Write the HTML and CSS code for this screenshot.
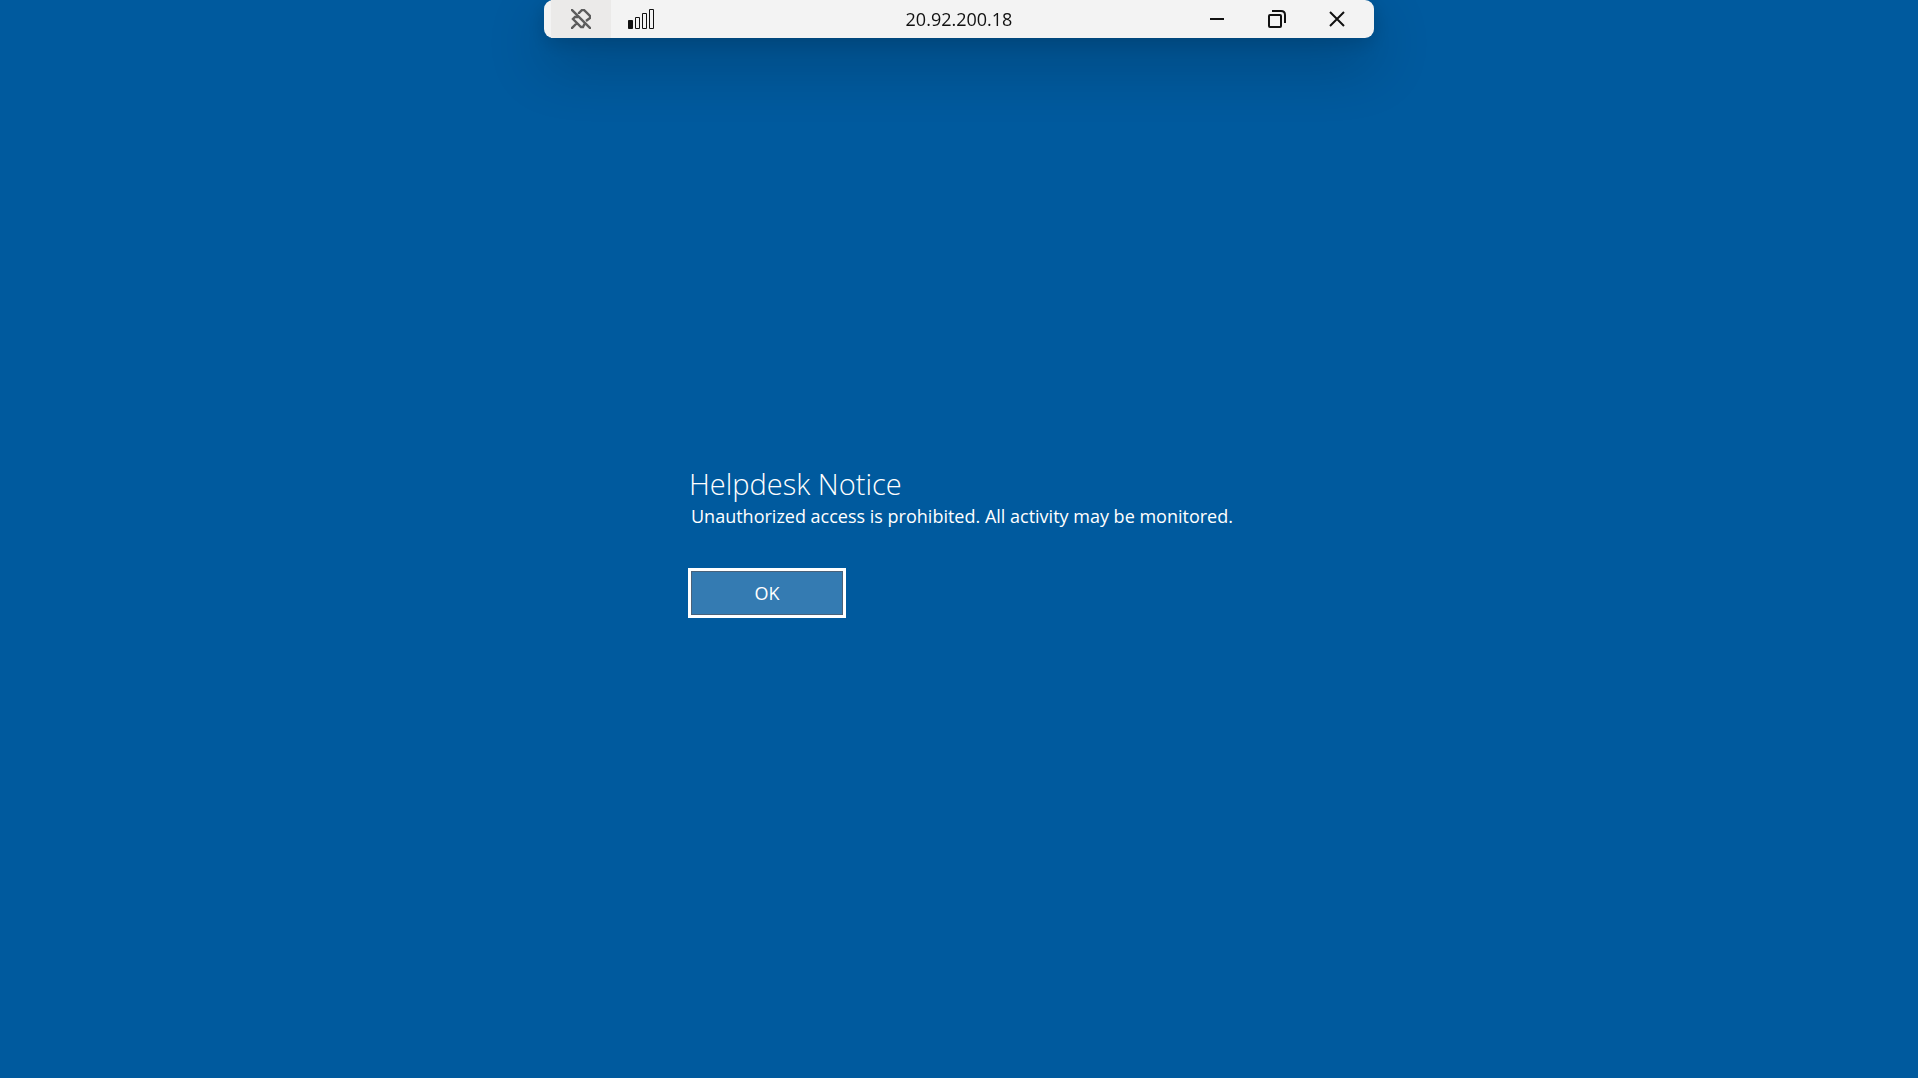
FILE: index.html
```html
<!DOCTYPE html>
<html lang="en">
<head>
<meta charset="utf-8">
<title>20.92.200.18 - Remote Desktop</title>
<link rel="stylesheet" href="styles.css">
</head>
<body>
<header class="connection-bar">
  <div class="bar-group">
    <button class="bar-button pin" type="button" aria-label="Unpin connection bar">
      <svg width="20" height="20" viewBox="0 0 20 20" fill="none" stroke="currentColor" stroke-width="2.400">
        <path d="M0 0L20 20M0 20L6 14M8 5V4L11 1H13L19 7V9L15 12M7 8L4 8L2 10L10 18H12L14 14"/>
      </svg>
    </button>
    <button class="bar-button signal" type="button" aria-label="Connection quality">
      <svg width="26" height="20" viewBox="0 0 26 20" fill="none" stroke="currentColor">
        <path fill="currentColor" d="M.5 11.500h4v8h-4z"/>
        <path d="M7.500 8.500h4v11h-4zM14.500 4.500h4v15h-4zM21.500 .5h4v19h-4z"/>
      </svg>
    </button>
  </div>
  <h1 class="bar-title">20.92.200.18</h1>
  <div class="bar-group bar-group-end">
    <button class="bar-button" type="button" aria-label="Minimize">
      <svg width="20" height="20" viewBox="0 0 20 20" fill="none" stroke="currentColor" stroke-width="2"><path d="M3 10h14"/></svg>
    </button>
    <button class="bar-button" type="button" aria-label="Restore">
      <svg width="20" height="20" viewBox="0 0 20 20" fill="none" stroke="currentColor" stroke-width="2">
        <rect x="2" y="6" width="12" height="12" rx="1"/><path d="M5 2h9q4 0 4 4v8"/>
      </svg>
    </button>
    <button class="bar-button" type="button" aria-label="Close">
      <svg width="20" height="20" viewBox="0 0 20 20" fill="none" stroke="currentColor" stroke-width="2"><path d="M3 3L17 17M17 3L3 17"/></svg>
    </button>
  </div>
</header>
<main class="screen">
  <section class="notice" aria-labelledby="notice-title">
    <h2 class="notice-title" id="notice-title">Helpdesk Notice</h2>
    <p class="notice-text">Unauthorized access is prohibited. All activity may be monitored.</p>
    <button class="ok-button" type="button">OK</button>
  </section>
</main>
</body>
</html>
```

FILE: styles.css
```css
* {
  box-sizing: border-box;
}

body {
  margin: 0;
  background: #005a9e;
  color: #fff;
  font-family: "Open Sans", "Noto Sans", sans-serif;
}

.connection-bar {
  position: fixed;
  top: 0;
  left: 50%;
  transform: translateX(-50%);
  display: grid;
  grid-template-columns: 1fr auto 1fr;
  align-items: center;
  width: 830px;
  max-width: 100%;
  height: 38px;
  padding: 0 7px;
  border-radius: 9px;
  background: #f3f3f3;
  color: #111;
  box-shadow: 0 24px 60px rgba(0, 0, 0, 0.24), 0 4px 20px rgba(0, 0, 0, 0.16);
}

.bar-group {
  display: flex;
}

.bar-group-end {
  justify-content: flex-end;
}

.bar-button {
  display: flex;
  align-items: center;
  justify-content: center;
  width: 60px;
  height: 38px;
  padding: 0;
  border: 0;
  background: transparent;
  color: inherit;
}

.pin {
  background: #ebeae9;
  color: #5c5c5c;
}

.bar-title {
  margin: 0;
  font-size: 18px;
  font-weight: 400;
  line-height: 24px;
}

.screen {
  display: flex;
  align-items: center;
  justify-content: center;
  min-height: 100vh;
  padding-top: 4px;
}

.notice {
  width: 542px;
  max-width: 100%;
}

.notice-title {
  margin: 0;
  padding-left: 1px;
  font-size: 29px;
  font-weight: 300;
  line-height: 40px;
}

.notice-text {
  margin: 0 0 40px;
  padding-left: 3px;
  font-size: 18px;
  line-height: 24px;
  white-space: nowrap;
}

.ok-button {
  width: 158px;
  height: 50px;
  padding: 0;
  border: 3px solid #fff;
  background: #347bb2;
  box-shadow: inset 0 0 0 1px #49627a;
  color: #fff;
  font: 400 18px/24px "Open Sans", "Noto Sans", sans-serif;
}

@media (max-width: 600px) {
  .notice-text {
    white-space: normal;
  }
}
```
